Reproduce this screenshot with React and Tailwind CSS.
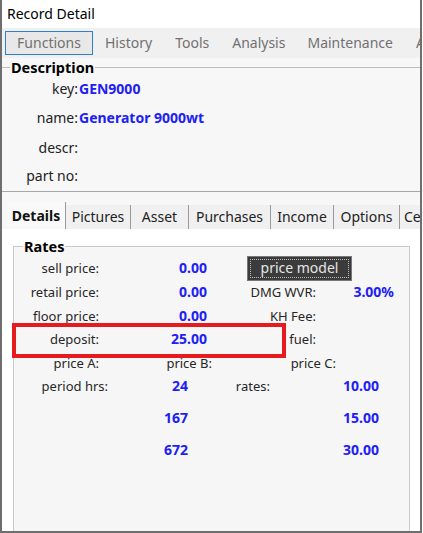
import React from 'react';

const font = { fontFamily: '"Noto Sans", "Open Sans", sans-serif' };

const Cell = ({ w, children, className = '' }) => (
    <div className={`shrink-0 text-right whitespace-nowrap ${className}`} style={{ width: w }}>
        {children}
    </div>
);

const Val = ({ children }) => <span className="font-bold text-[14px] text-[#2020f4]">{children}</span>;

const DescRow = ({ label, value, h }) => (
    <div className={`flex items-center ${h}`}>
        <div className="w-[76px] shrink-0 text-right text-[#222]">{label}</div>
        <div className="pl-[1px] font-bold text-[#2020f4]">{value}</div>
    </div>
);

const Tab = ({ label, active, w }) => (
    <div
        className={
            active
                ? 'h-[27px] flex items-center justify-center bg-[#f9f9f9] border-r border-[#9a9a9a] font-bold text-[#111] shrink-0'
                : 'h-[24px] mt-[3px] flex items-center justify-center bg-[#f0f0f0] border-r border-[#9a9a9a] text-[#222] shrink-0'
        }
        style={{ width: w }}
    >
        {label}
    </div>
);

export default function App() {
    return (
        <div className="w-[422px] h-[533px] overflow-hidden border-x-2 border-b-2 border-[#6e6e6e] bg-white text-[13px] leading-[16px]" style={font}>
            {/* title */}
            <div className="h-[28px] flex items-center pl-[5px] text-[14px] text-black">Record Detail</div>

            {/* menu strip */}
            <div className="h-[30px] bg-[#f0f0f0] flex items-start pt-[3px] pl-[3px] text-[14px] text-[#717171] whitespace-nowrap overflow-hidden">
                <div className="shrink-0 h-[24px] w-[88px] border border-[#2f7fd0] bg-[#e8e8e8] flex items-center justify-center">Functions</div>
                <div className="shrink-0 h-[24px] flex items-center ml-[12px]">History</div>
                <div className="shrink-0 h-[24px] flex items-center ml-[23px]">Tools</div>
                <div className="shrink-0 h-[24px] flex items-center ml-[23px]">Analysis</div>
                <div className="shrink-0 h-[24px] flex items-center ml-[22px]">Maintenance</div>
                <div className="shrink-0 h-[24px] flex items-center ml-[23px]">A</div>
            </div>

            {/* description */}
            <div className="bg-[#f7f7f7] pt-[1px] text-[14px]">
                <fieldset className="border-t border-[#bdbdbd] pb-[1px]">
                    <legend className="ml-[8px] px-[1px] font-bold text-[14.5px] text-black leading-[16px]">Description</legend>
                    <DescRow label="key:" value="GEN9000" h="h-[28px]" />
                    <DescRow label="name:" value="Generator 9000wt" h="h-[30px]" />
                    <DescRow label="descr:" value="" h="h-[29px]" />
                    <DescRow label="part no:" value="" h="h-[28px]" />
                </fieldset>
                <div className="border-t border-[#a8a8a8]" />

                {/* tabs */}
                <div className="mt-[10px] flex pl-[5px] text-[14px] whitespace-nowrap overflow-hidden">
                    <Tab label="Details" active w={59} />
                    <Tab label="Pictures" w={65} />
                    <Tab label="Asset" w={58} />
                    <Tab label="Purchases" w={82} />
                    <Tab label="Income" w={63} />
                    <Tab label="Options" w={66} />
                    <div className="shrink-0 h-[24px] mt-[3px] pl-[4px] flex items-center bg-[#f0f0f0] text-[#222]">Ce</div>
                </div>
            </div>

            {/* tab panel */}
            <div className="h-[310px] bg-white pt-[9px] pl-[11px] pr-[10px]">
                <fieldset className="h-[320px] border border-[#c9c9c9] bg-[#f6f6f6] text-[#262626] whitespace-nowrap">
                    <legend className="ml-[9px] px-[1px] font-bold text-[14.5px] text-black leading-[16px]">Rates</legend>

                    <div className="flex items-center h-[24px] mt-[2px]">
                        <Cell w={85}>sell price:</Cell>
                        <Cell w={108}><Val>0.00</Val></Cell>
                        <div className="ml-[40px] h-[25px] w-[105px] bg-[#3b3b3b] border border-[#777] p-[2px]">
                            <div className="h-full border border-dotted border-[#bbb] flex items-center justify-center text-[14px] text-[#e6e6e6]">price model</div>
                        </div>
                    </div>

                    <div className="flex items-center h-[24px]">
                        <Cell w={85}>retail price:</Cell>
                        <Cell w={108}><Val>0.00</Val></Cell>
                        <Cell w={109}>DMG WVR:</Cell>
                        <Cell w={78}><Val>3.00%</Val></Cell>
                    </div>

                    <div className="flex items-center h-[23px]">
                        <Cell w={85}>floor price:</Cell>
                        <Cell w={108}><Val>0.00</Val></Cell>
                        <Cell w={109}>KH Fee:</Cell>
                    </div>

                    <div className="relative flex items-center h-[24px]">
                        <Cell w={85}>deposit:</Cell>
                        <Cell w={108}><Val>25.00</Val></Cell>
                        <Cell w={109}>fuel:</Cell>
                        <div className="absolute left-[-2px] top-[-4px] w-[274px] h-[35px] border-[4px] border-[#e51b20]" />
                    </div>

                    <div className="flex items-center h-[24px]">
                        <Cell w={85}>price A:</Cell>
                        <Cell w={113}>price B:</Cell>
                        <Cell w={124}>price C:</Cell>
                    </div>

                    <div className="flex items-center h-[22px]">
                        <Cell w={94}>period hrs:</Cell>
                        <Cell w={80}><Val>24</Val></Cell>
                        <Cell w={82}>rates:</Cell>
                        <Cell w={109}><Val>10.00</Val></Cell>
                    </div>

                    <div className="flex items-center h-[32px] mt-[5px]">
                        <Cell w={94}></Cell>
                        <Cell w={80}><Val>167</Val></Cell>
                        <Cell w={82}></Cell>
                        <Cell w={109}><Val>15.00</Val></Cell>
                    </div>

                    <div className="flex items-center h-[32px]">
                        <Cell w={94}></Cell>
                        <Cell w={80}><Val>672</Val></Cell>
                        <Cell w={82}></Cell>
                        <Cell w={109}><Val>30.00</Val></Cell>
                    </div>
                </fieldset>
            </div>
        </div>
    );
}
